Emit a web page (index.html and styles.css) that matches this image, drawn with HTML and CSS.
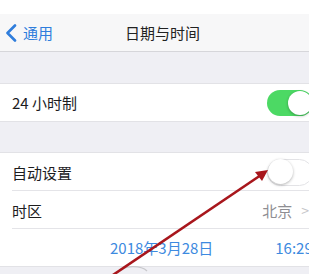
FILE: index.html
```html
<!DOCTYPE html>
<html>
<head>
<meta charset="utf-8">
<link rel="stylesheet" href="styles.css">
</head>
<body>
<div class="screen">
  <div class="status"></div>
  <div class="nav">
    <div class="back">
      <svg class="chev" width="12" height="18" viewBox="0 0 12 18"><path d="M10 1.5 L2.5 9 L10 16.5" fill="none" stroke="#2f7ddc" stroke-width="2.6" stroke-linecap="round" stroke-linejoin="round"/></svg>
      <span>通用</span>
    </div>
    <div class="title">日期与时间</div>
  </div>
  <div class="gap"></div>
  <div class="group">
    <div class="row">
      <span class="label">24 小时制</span>
      <span class="toggle on"><span class="knob"></span></span>
    </div>
  </div>
  <div class="gap gap2"></div>
  <div class="group">
    <div class="row sep">
      <span class="label">自动设置</span>
      <span class="toggle off"><span class="knob"></span></span>
    </div>
    <div class="row sep">
      <span class="label">时区</span>
      <span class="value">北京<span class="arrow">&gt;</span></span>
    </div>
    <div class="row date">
      <span class="blue">2018年3月28日</span>
      <span class="blue time">16:29</span>
    </div>
  </div>
  <div class="gap"></div>
  <svg class="overlay" width="309" height="274" viewBox="0 0 309 274">
    <path d="M118 272 C124 265, 141 265, 147 271" fill="none" stroke="#c8c8cc" stroke-width="1.2"/>
    <line x1="110" y1="277" x2="261" y2="175" stroke="#a8161c" stroke-width="2.6"/>
    <polygon points="268,170 255,172 262,181" fill="#a8161c"/>
  </svg>
</div>
</body>
</html>
```
FILE: styles.css
```css
html, body {
  margin: 0;
  padding: 0;
  overflow: hidden;
  background: #efeff4;
}
.screen {
  position: relative;
  width: 320px;
  height: 274px;
  overflow: hidden;
  font-family: "Noto Sans CJK SC", "Noto Sans", sans-serif;
  font-size: 15px;
  color: #1c1c1e;
}
.status {
  height: 14px;
  background: #ffffff;
}
.nav {
  height: 37px;
  background: #f7f7f8;
  border-bottom: 1px solid #d6d6da;
  position: relative;
  display: flex;
  align-items: center;
}
.back {
  display: flex;
  align-items: center;
  gap: 6px;
  padding-left: 5px;
  color: #2f7ddc;
  font-size: 15px;
}
.title {
  position: absolute;
  left: 125px;
  top: 8px;
  font-size: 15px;
  color: #222;
}
.gap {
  height: 31px;
}
.gap2 {
  height: 30px;
}
.group {
  background: #fff;
  border-top: 1px solid #e2e2e6;
  border-bottom: 1px solid #e2e2e6;
}
.row {
  height: 37px;
  display: flex;
  align-items: center;
  padding-left: 12px;
  position: relative;
}
.row.sep::after {
  content: "";
  position: absolute;
  left: 12px;
  right: 0;
  bottom: 0;
  height: 1px;
  background: #e4e4e8;
}
.row.sep {
  height: 38px;
}
.label {
  flex: 1;
}
.toggle {
  width: 46px;
  height: 26px;
  border-radius: 13px;
  margin-right: 7px;
  position: relative;
  box-sizing: border-box;
}
.toggle.on {
  background: #4cd964;
}
.toggle.off {
  background: #fff;
  border: 1.5px solid #e3e3e6;
  height: 27px;
  border-radius: 14px;
}
.knob {
  position: absolute;
  top: 1px;
  width: 24px;
  height: 24px;
  border-radius: 50%;
  background: #fff;
  box-shadow: 0 1px 3px rgba(0,0,0,0.3);
}
.toggle.on .knob {
  right: 1px;
}
.toggle.off .knob {
  left: -0.5px;
  top: -0.5px;
  width: 25px;
  height: 25px;
}
.value {
  color: #8e8e93;
  margin-right: 11px;
  display: flex;
  align-items: center;
}
.arrow {
  color: #c4c4c8;
  margin-left: 9px;
  font-size: 14px;
}
.date {
  padding-left: 110px;
  gap: 62px;
}
.blue {
  color: #3d8ae0;
}
.overlay {
  position: absolute;
  left: 0;
  top: 0;
}
```
